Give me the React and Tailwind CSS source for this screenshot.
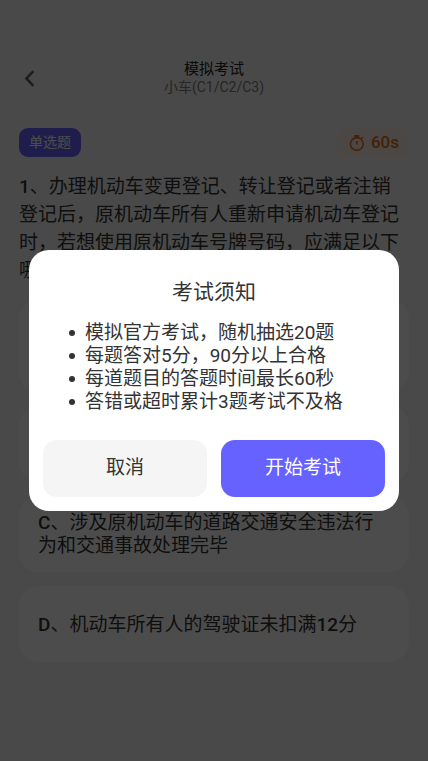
import React from 'react';

const question = '1、办理机动车变更登记、转让登记或者注销登记后，原机动车所有人重新申请机动车登记时，若想使用原机动车号牌号码，应满足以下哪些条件？';

const options = [
  { key: 'A', text: '在办理转让登记或者注销登记后的两年内提出申请，且原机动车号牌号码在此期间未被其他人选用' },
  { key: 'B', text: '机动车所有人拥有原机动车且使用原号牌号码一年以上' },
  { key: 'C', text: '涉及原机动车的道路交通安全违法行为和交通事故处理完毕' },
  { key: 'D', text: '机动车所有人的驾驶证未扣满12分' },
];

const notices = [
  '模拟官方考试，随机抽选20题',
  '每题答对5分，90分以上合格',
  '每道题目的答题时间最长60秒',
  '答错或超时累计3题考试不及格',
];

// 字母和数字加粗，中文保持常规字重
const MixedText = ({ text }) =>
  text.split(/([A-Za-z0-9]+)/).map((part, i) =>
    i % 2 === 1 ? <span key={i} className="font-medium">{part}</span> : part
  );

const ExamHeader = () => (
  <header className="grid grid-cols-[40px_1fr_40px] items-center px-4">
    <button type="button" aria-label="返回" className="p-1 text-[#666]">
      <svg width="20" height="20" viewBox="0 0 20 20" fill="none" stroke="currentColor" strokeWidth="2.6">
        <path d="M13.4 3.2 L6.4 10.5 L13.4 17.8" />
      </svg>
    </button>
    <div className="text-center">
      <h1 className="text-[15px] leading-[18px] text-[#222]">模拟考试</h1>
      <p className="text-[14px] leading-[18px] text-[#808080]">小车(C1/C2/C3)</p>
    </div>
  </header>
);

const TimerBadge = ({ seconds }) => (
  <div className="flex h-[29px] items-center gap-1 rounded-[9px] bg-[#fbeee6] px-2.5 text-[#e8701a]">
    <svg width="20" height="20" viewBox="0 0 20 20" fill="none" stroke="currentColor" strokeWidth="1.6">
      <circle cx="9.8" cy="11" r="6.4" />
      <path d="M9.8 8v3.6M14.4 5.4l1.3-1.3" />
      <path d="M7.4 3h4.8" strokeWidth="2" />
    </svg>
    <span className="text-[17px] font-medium">{seconds}s</span>
  </div>
);

// 考试须知弹窗
const NoticeDialog = () => (
  <div className="fixed inset-0 flex items-center justify-center bg-black/70 px-[29px]">
    <div
      role="dialog"
      aria-modal="true"
      aria-labelledby="notice-title"
      className="w-full max-w-md rounded-[20px] bg-white px-[14px] pt-7 pb-[14px] text-[#333]"
    >
      <h2 id="notice-title" className="text-center text-[21px] leading-7">考试须知</h2>
      <ul className="mt-[15px] pl-[26px] text-[19px] leading-[23px]">
        {notices.map(item => (
          <li key={item} className="flex items-center gap-2.5 before:size-1.5 before:rounded-full before:bg-[#333]">
            {item}
          </li>
        ))}
      </ul>
      <div className="mt-[27px] grid grid-cols-2 gap-[14px] text-[19px]">
        <button type="button" className="h-[57px] rounded-[14px] bg-[#f5f5f5]">取消</button>
        <button type="button" className="h-[57px] rounded-[14px] bg-[#6562ff] text-white">开始考试</button>
      </div>
    </div>
  </div>
);

export default function App() {
  return (
    <div className="min-h-screen bg-[#f5f5f5] pt-[60px] font-[Roboto,'Noto_Sans_CJK_SC',sans-serif] text-[#333]">
      <ExamHeader />
      <main className="px-[19px] pt-8">
        <div className="flex items-center justify-between">
          <span className="flex h-[29px] items-center rounded-[9px] bg-[#6562ff] px-2.5 text-[14px] text-white">单选题</span>
          <TimerBadge seconds={60} />
        </div>
        <p className="mt-4 text-[19px] leading-7">
          <MixedText text={question} />
        </p>
        <div className="mt-[14px] flex flex-col gap-[14px]">
          {options.map(option => (
            <button
              key={option.key}
              type="button"
              className="min-h-[76px] rounded-[20px] bg-white px-[19px] py-3 text-left text-[19px] leading-[23px]"
            >
              <MixedText text={`${option.key}、${option.text}`} />
            </button>
          ))}
        </div>
      </main>
      <NoticeDialog />
    </div>
  );
}
